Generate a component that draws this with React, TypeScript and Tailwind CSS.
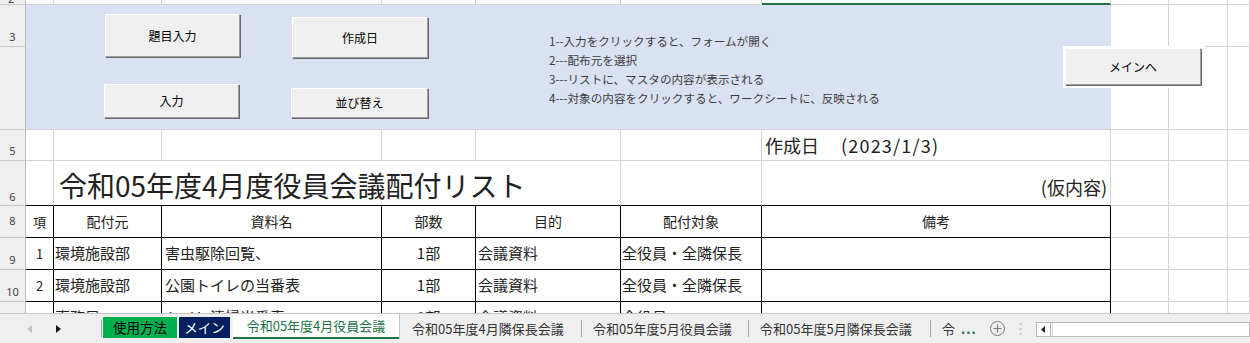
import React from 'react';

const W = {
  A: 'w-[28px]',
  B: 'w-[108px]',
  C: 'w-[220px]',
  D: 'w-[94px]',
  E: 'w-[145px]',
  F: 'w-[141px]',
  G: 'w-[349px]',
  H: 'w-[58px]',
  I: 'w-[59px]',
};

type CellProps = {
  w: string;
  right?: 'grid' | 'black';
  bottom?: 'grid' | 'black';
  className?: string;
  children?: React.ReactNode;
};

function Cell({ w, right = 'grid', bottom = 'grid', className = '', children }: CellProps) {
  const r = right === 'black' ? 'border-r-black' : 'border-r-[#d4d4d4]';
  const b = bottom === 'black' ? 'border-b-black' : 'border-b-[#d4d4d4]';
  return (
    <div className={`${w} shrink-0 h-full border-r border-b ${r} ${b} flex items-center overflow-visible whitespace-nowrap ${className}`}>
      {children}
    </div>
  );
}

function RowHead({ label, pb = 'pb-[3px]', bottom = true }: { label?: string; pb?: string; bottom?: boolean }) {
  return (
    <div
      className={`w-[26px] shrink-0 h-full bg-[#efefef] border-r border-r-[#bcbcbc] ${bottom ? 'border-b border-b-[#c8c8c8]' : ''} flex items-end justify-center ${pb} overflow-hidden`}
    >
      <span className="font-['Noto_Sans',sans-serif] text-[11px] leading-[12px] text-[#444]">{label}</span>
    </div>
  );
}

// the three plain columns right of the sheet
function Tail() {
  return (
    <>
      <Cell w={W.H} />
      <Cell w={W.I} />
      <Cell w="flex-1" />
    </>
  );
}

function Btn({ className, children }: { className: string; children: React.ReactNode }) {
  return (
    <div
      className={`absolute bg-[#f0f0f0] border border-white border-r-[#a0a0a0] border-b-[#a0a0a0] shadow-[1px_1px_0_#696969] flex items-center justify-center text-[12px] text-black ${className}`}
    >
      {children}
    </div>
  );
}

type Item = { no: string; from: string; name: string; count: string; purpose: string; target: string };

const items: Item[] = [
  { no: '1', from: '環境施設部', name: '害虫駆除回覧、', count: '1部', purpose: '会議資料', target: '全役員・全隣保長' },
  { no: '2', from: '環境施設部', name: '公園トイレの当番表', count: '1部', purpose: '会議資料', target: '全役員・全隣保長' },
  { no: '3', from: '事務局', name: 'トイレ清掃当番表', count: '1部', purpose: '会議資料', target: '全役員' },
];

function TableRow({ label, item }: { label: string; item: Item }) {
  return (
    <div className="flex h-[32px] text-[15px] text-[#222]">
      <RowHead label={label} />
      <Cell w={W.A} right="black" bottom="black" className="justify-center text-[13px]">{item.no}</Cell>
      <Cell w={W.B} right="black" bottom="black" className="pl-[1px]">{item.from}</Cell>
      <Cell w={W.C} right="black" bottom="black" className="pl-[3px]">{item.name}</Cell>
      <Cell w={W.D} right="black" bottom="black" className="justify-center">{item.count}</Cell>
      <Cell w={W.E} right="black" bottom="black" className="pl-[2px]">{item.purpose}</Cell>
      <Cell w={W.F} right="black" bottom="black" className="pl-[1px]">{item.target}</Cell>
      <Cell w={W.G} right="black" bottom="black" />
      <Tail />
    </div>
  );
}

const tabs = ['令和05年度4月隣保長会議', '令和05年度5月役員会議', '令和05年度5月隣保長会議'];

function TabBar() {
  return (
    <div className="h-[30px] shrink-0 bg-[#efefef] border-t border-t-[#c6c6c6] flex items-start text-[13px] text-[#333]">
      {/* sheet navigation */}
      <div className="w-[101px] h-full flex items-center">
        <svg width="5" height="8" viewBox="0 0 5 8" className="ml-[27px]">
          <polygon points="5,0 5,8 0,4" fill="#c2c2c2" />
        </svg>
        <svg width="5" height="8" viewBox="0 0 5 8" className="ml-[24px]">
          <polygon points="0,0 0,8 5,4" fill="#1a1a1a" />
        </svg>
      </div>
      <div className="w-px h-[17px] mt-[6px] bg-[#a6a6a6]" />
      <div className="ml-px w-[74px] h-[21px] mt-[3px] bg-[#00b050] flex items-center justify-center text-black text-[13.5px]">使用方法</div>
      <div className="ml-[2px] w-[51px] h-[21px] mt-[3px] bg-[#002060] flex items-center justify-center text-white text-[13.5px]">メイン</div>
      <div className="ml-[3px] w-[166px] h-[25px] bg-white border-b-2 border-b-[#217346] shadow-[1px_0_0_#c6c6c6] flex items-center justify-center text-[#217346]">
        令和05年度4月役員会議
      </div>
      {tabs.map((t, i) => (
        <React.Fragment key={t}>
          <div className={`h-full flex items-center whitespace-nowrap ${i === 0 ? 'w-[182px] pl-[13px]' : i === 1 ? 'w-[166px] pl-[11px]' : 'w-[181px] pl-[11px]'}`}>
            {t}
          </div>
          <div className="w-px h-[17px] mt-[6px] bg-[#a6a6a6]" />
        </React.Fragment>
      ))}
      <div className="h-full flex items-center pl-[11px] whitespace-nowrap">
        令 <span className="ml-[6px] text-[#217346] font-bold tracking-[1px]">...</span>
      </div>
      <svg width="17" height="17" viewBox="0 0 17 17" className="ml-[12px] mt-[6px]">
        <circle cx="8.5" cy="8.5" r="7" fill="none" stroke="#7a7a7a" strokeWidth="1" />
        <path d="M8.5 4.5v8M4.5 8.5h8" stroke="#7a7a7a" strokeWidth="1.2" />
      </svg>
      <svg width="3" height="14" viewBox="0 0 3 14" className="ml-[13px] mt-[8px]">
        <rect x="0.5" y="1" width="2" height="2" fill="#c8c8c8" />
        <rect x="0.5" y="6" width="2" height="2" fill="#c8c8c8" />
        <rect x="0.5" y="11" width="2" height="2" fill="#c8c8c8" />
      </svg>
      {/* horizontal scrollbar */}
      <div className="ml-[14px] mt-[8px] flex-1 h-[15px] bg-white border border-[#b8b8b8] flex">
        <div className="w-[14px] h-full flex items-center justify-center border-r border-r-[#b8b8b8]">
          <svg width="4" height="7" viewBox="0 0 4 7">
            <polygon points="4,0 4,7 0,3.5" fill="#222" />
          </svg>
        </div>
        <div className="flex-1 h-full border-l border-l-[#d8d8d8] ml-px" />
      </div>
    </div>
  );
}

export default function App() {
  return (
    <div className="w-[1250px] h-[343px] overflow-hidden bg-white flex flex-col font-['Noto_Sans_CJK_JP','Noto_Sans',sans-serif]">
      <div className="relative h-[313px] overflow-hidden">
        {/* row 2 (mostly scrolled out) */}
        <div className="flex h-[5px]">
          <div className="w-[26px] shrink-0 h-full bg-[#efefef] border-r border-r-[#bcbcbc] border-b border-b-[#c8c8c8] relative overflow-hidden">
            <span className="absolute left-[8px] bottom-[-1px] font-['Noto_Sans',sans-serif] text-[11px] leading-[12px] text-[#444]">2</span>
          </div>
          <Cell w={W.A} />
          <Cell w={W.B} />
          <Cell w={W.C} />
          <Cell w={W.D} />
          <Cell w={W.E} />
          <Cell w={W.F} />
          <div className={`${W.G} shrink-0 h-full border-b-2 border-b-[#217346] border-r border-r-[#d4d4d4]`} />
          <Tail />
        </div>

        {/* rows 3-4: button panel */}
        <div className="flex h-[125px]">
          <div className="w-[26px] shrink-0 flex flex-col">
            <div className="h-[42px]">
              <RowHead label="3" />
            </div>
            <div className="h-[83px]">
              <RowHead />
            </div>
          </div>
          <div className="w-[1085px] shrink-0 h-full bg-[#d9e1f2] border-b border-b-[#d4d4d4] relative">
            <Btn className="left-[79px] top-[9px] w-[135px] h-[43px]">題目入力</Btn>
            <Btn className="left-[266px] top-[12px] w-[136px] h-[41px]">作成日</Btn>
            <Btn className="left-[78px] top-[79px] w-[135px] h-[34px]">入力</Btn>
            <Btn className="left-[265px] top-[83px] w-[137px] h-[30px]">並び替え</Btn>
            <div className="absolute left-[523px] top-[27px] text-[11.6px] leading-[19px] text-[#3c3c3c] whitespace-nowrap">
              <p>1--入力をクリックすると、フォームが開く</p>
              <p>2---配布元を選択</p>
              <p>3---リストに、マスタの内容が表示される</p>
              <p>4---対象の内容をクリックすると、ワークシートに、反映される</p>
            </div>
          </div>
          {[W.H, W.I, 'flex-1'].map((w) => (
            <div key={w} className={`${w} shrink-0 flex flex-col`}>
              <div className="h-[42px]">
                <Cell w="w-full" />
              </div>
              <div className="h-[83px]">
                <Cell w="w-full" />
              </div>
            </div>
          ))}
        </div>

        {/* row 5 */}
        <div className="flex h-[31px]">
          <RowHead label="5" />
          <Cell w={W.A} />
          <Cell w={W.B} />
          <Cell w={W.C} />
          <Cell w={W.D} />
          <Cell w={W.E} />
          <Cell w={W.F} />
          <Cell w={W.G} className="pl-[3px] text-[18px] text-[#222]">
            作成日<span className="ml-[22px] tracking-[1.2px]">(2023/1/3)</span>
          </Cell>
          <Tail />
        </div>

        {/* row 6: title */}
        <div className="flex h-[45px]">
          <RowHead label="6" pb="pb-[2px]" />
          <Cell w={W.A} bottom="black" />
          <Cell w="w-[567px]" bottom="black" className="items-end pb-[2px] pl-[5px] text-[28px] leading-[36px] text-[#222]">
            令和05年度4月度役員会議配付リスト
          </Cell>
          <Cell w={W.F} bottom="black" />
          <Cell w={W.G} bottom="black" className="justify-end items-end pb-[4px] pr-[3px] text-[18px] text-[#222]">
            (仮内容)
          </Cell>
          <Tail />
        </div>

        {/* row 8: table header */}
        <div className="flex h-[32px] text-[14px] text-[#222]">
          <RowHead label="8" pb="pb-[10px]" />
          <Cell w={W.A} right="black" bottom="black" className="justify-center text-[13px]">項</Cell>
          <Cell w={W.B} right="black" bottom="black" className="justify-center">配付元</Cell>
          <Cell w={W.C} right="black" bottom="black" className="justify-center">資料名</Cell>
          <Cell w={W.D} right="black" bottom="black" className="justify-center">部数</Cell>
          <Cell w={W.E} right="black" bottom="black" className="justify-center">目的</Cell>
          <Cell w={W.F} right="black" bottom="black" className="justify-center">配付対象</Cell>
          <Cell w={W.G} right="black" bottom="black" className="justify-center">備考</Cell>
          <Tail />
        </div>

        <TableRow label="9" item={items[0]} />
        <TableRow label="10" item={items[1]} />
        <TableRow label="11" item={items[2]} />

        {/* メインへ button, floating over G/H */}
        <div className="absolute left-[1063px] top-[46px] w-[142px] h-[42px] bg-white p-[2px]">
          <Btn className="relative w-[136px] h-[37px]">メインへ</Btn>
        </div>
      </div>
      <TabBar />
    </div>
  );
}
